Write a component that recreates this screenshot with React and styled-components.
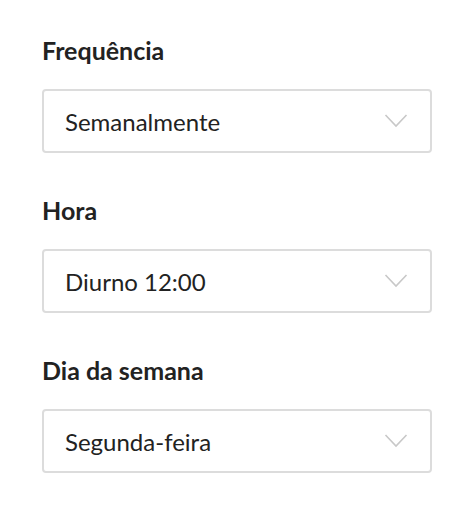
import React from 'react';
import styled, { createGlobalStyle } from 'styled-components';

const GlobalStyle = createGlobalStyle`
  body {
    margin: 0;
    background: #ffffff;
    font-family: 'Lato', 'Liberation Sans', sans-serif;
  }
`;

const Page = styled.div`
  padding: 32px 42px 0 42px;
  display: flex;
  flex-direction: column;
  gap: 39px;
`;

const Campo = styled.div`
  display: flex;
  flex-direction: column;
`;

const Rotulo = styled.label`
  font-size: 25px;
  font-weight: 700;
  line-height: 36px;
  color: #222222;
  margin-bottom: 21px;
`;

const Caixa = styled.div`
  width: 390px;
  height: 64px;
  box-sizing: border-box;
  border: 2px solid #dcdcdc;
  border-radius: 4px;
  display: flex;
  align-items: center;
  justify-content: space-between;
  padding: 0 22px 0 21px;
  background: #ffffff;
`;

const Valor = styled.span`
  font-size: 24px;
  color: #222222;
`;

function Seta() {
  return (
    <svg width="24" height="16" viewBox="0 0 24 16">
      <path d="M1.5 2 L12 13 L22.5 2" fill="none" stroke="#c8c8c8" strokeWidth="1.6" />
    </svg>
  );
}

function Seletor(props) {
  return (
    <Campo>
      <Rotulo>{props.rotulo}</Rotulo>
      <Caixa>
        <Valor>{props.valor}</Valor>
        <Seta />
      </Caixa>
    </Campo>
  );
}

export default function App() {
  return (
    <>
      <GlobalStyle />
      <Page>
        <Seletor rotulo="Frequência" valor="Semanalmente" />
        <Seletor rotulo="Hora" valor="Diurno 12:00" />
        <Seletor rotulo="Dia da semana" valor="Segunda-feira" />
      </Page>
    </>
  );
}
